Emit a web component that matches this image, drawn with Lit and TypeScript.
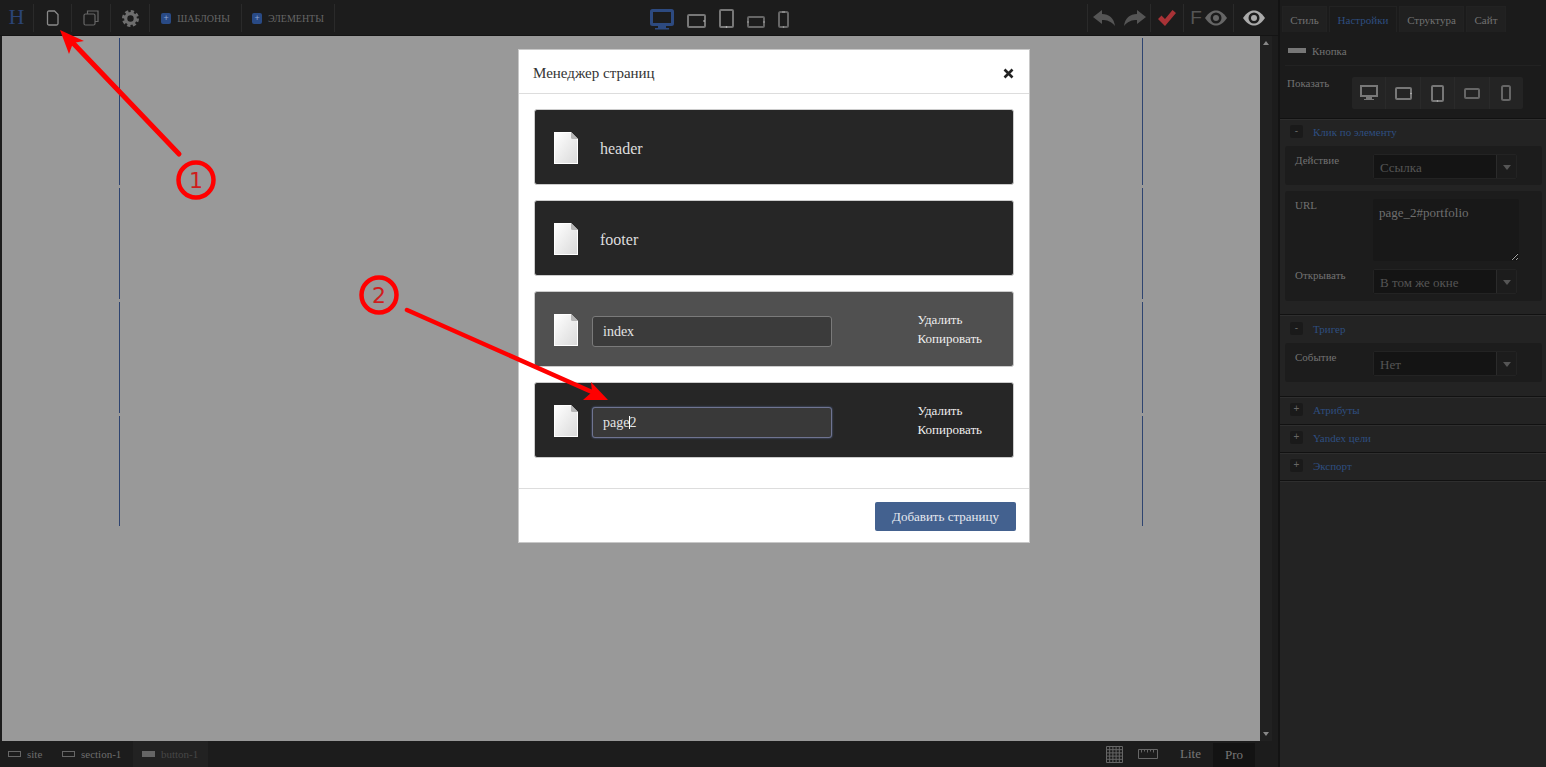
import { LitElement, html, css } from 'lit';
import { customElement } from 'lit/decorators.js';

const pageIcon = html`<svg class="page" width="24" height="32" viewBox="0 0 24 32">
  <defs><linearGradient id="pg" x1="0" y1="0" x2="1" y2="1"><stop offset="0" stop-color="#fff" /><stop offset="1" stop-color="#dadada" /></linearGradient></defs>
  <path d="M0 0H17L24 7V32H0Z" fill="#fff" />
  <path d="M1 1H16.500L23 7.500V31H1Z" fill="url(#pg)" />
  <path d="M17 0L24 7H18.500Q17 7 17 5.500Z" fill="#b5b5b5" />
</svg>`;

// toolbar device pictures, all in a 24px high box so they share a top edge
const bigDevices = html`
  <svg width="24" height="24" viewBox="0 0 24 24"><rect x="1.500" y="2.500" width="21" height="14" rx="1" fill="none" stroke="#2d4a80" stroke-width="3" /><path d="M8 18h8v2h3v1.500H5V20h3z" fill="#2d4a80" /></svg>
  <svg width="19" height="24" viewBox="0 0 19 24"><rect x="1" y="7" width="17" height="12" rx="1" fill="none" stroke="#777" stroke-width="2" /><circle cx="17" cy="13" r=".8" fill="#ccc" /></svg>
  <svg width="15" height="24" viewBox="0 0 15 24"><rect x="1" y="2" width="13" height="17" rx="1" fill="none" stroke="#777" stroke-width="2" /><circle cx="7.500" cy="19" r=".8" fill="#ccc" /></svg>
  <svg width="18" height="24" viewBox="0 0 18 24"><rect x="1" y="9" width="16" height="10" rx="1" fill="none" stroke="#666" stroke-width="2" /><circle cx="1" cy="14" r=".8" fill="#aaa" /><circle cx="17" cy="14" r=".8" fill="#aaa" /></svg>
  <svg width="11" height="24" viewBox="0 0 11 24"><rect x="1" y="4" width="9" height="15" rx="1.500" fill="none" stroke="#666" stroke-width="2" /><circle cx="5.500" cy="19" r=".8" fill="#aaa" /><path d="M4 4h3" stroke="#aaa" /></svg>
`;

const eye = (c: string) => html`<svg width="22" height="16" viewBox="0 0 22 16">
  <path d="M0 8C4 2 8 .5 11 .5S18 2 22 8C18 14 14 15.500 11 15.500S4 14 0 8Z" fill="${c}" />
  <circle cx="11" cy="8" r="5.500" fill="#1c1c1c" /><circle cx="11" cy="8" r="3" fill="${c}" />
</svg>`;

const smallDevices = html`
  <div class="show-cell"><svg width="18" height="16" viewBox="0 0 18 16"><rect x="1" y="1" width="16" height="10" fill="none" stroke="#777" stroke-width="2" /><path d="M6 12h6v2h2v1H4v-1h2z" fill="#777" /></svg></div>
  <div class="show-cell"><svg width="17" height="13" viewBox="0 0 17 13"><rect x="1" y="1" width="15" height="11" rx="1" fill="none" stroke="#777" stroke-width="2" /><circle cx="16" cy="6.500" r=".8" fill="#bbb" /></svg></div>
  <div class="show-cell"><svg width="13" height="17" viewBox="0 0 13 17"><rect x="1" y="1" width="11" height="15" rx="1" fill="none" stroke="#777" stroke-width="2" /><circle cx="6.500" cy="16" r=".8" fill="#bbb" /></svg></div>
  <div class="show-cell"><svg width="16" height="11" viewBox="0 0 16 11"><rect x="1" y="1" width="14" height="9" rx="1" fill="none" stroke="#666" stroke-width="2" /></svg></div>
  <div class="show-cell"><svg width="10" height="16" viewBox="0 0 10 16"><rect x="1" y="1" width="8" height="14" rx="1.500" fill="none" stroke="#666" stroke-width="2" /></svg></div>
`;

const guideNicks = html`<i class="nick n1"></i><i class="nick n2"></i><i class="nick n3"></i>`;

const select = (value: string) => html`<div class="select"><span class="select-value">${value}</span><span class="select-arrow"></span></div>`;

const section = (sign: string, title: string) => html`<div class="sec-head"><span class="sign">${sign}</span><span class="sec-title">${title}</span></div>`;

@customElement('app-root')
export class AppRoot extends LitElement {
  static styles = css`
    :host {
      display: block;
      position: relative;
      width: 1546px;
      height: 767px;
      overflow: hidden;
      font-family: 'Liberation Serif', serif;
      background: #1c1c1c;
    }
    * { box-sizing: border-box; }
    .app { display: grid; grid-template-columns: 1280px 266px; grid-template-rows: 767px; height: 767px; }
    .left { display: flex; flex-direction: column; min-width: 0; border-right: 2px solid #131313; }

    .toolbar { height: 36px; flex: none; display: flex; align-items: stretch; background: #1c1c1c; border-bottom: 1px solid #141414; }
    .tool { display: flex; align-items: center; justify-content: center; border-right: 1px solid #2a2a2a; margin: 4px 0 3px; color: #666; font-size: 10px; }
    .logo { width: 34px; color: #2b4476; font-size: 22px; padding-bottom: 2px; }
    .w38 { width: 38px; }
    .w39 { width: 39px; }
    .w92 { width: 92px; }
    .w93 { width: 93px; }
    .plus { width: 10px; height: 11px; margin-right: 6px; border-radius: 2px; background: #294a85; color: #8ea6d0; font: 9px/11px 'Liberation Sans', sans-serif; text-align: center; }
    .devices { display: flex; align-items: flex-start; gap: 13px; margin-left: 315px; padding-top: 8px; }
    .right-tools { display: flex; margin-left: auto; padding-right: 7px; }
    .undo { width: 64px; gap: 9px; border-left: 1px solid #2a2a2a; }
    .check { width: 33px; }
    .fview { width: 50px; gap: 3px; color: #555; font: 19px 'Liberation Sans', sans-serif; }
    .view { width: 37px; border-right: 0; padding-left: 2px; }

    .middle { flex: 1; display: flex; min-height: 0; padding: 0 6px 0 2px; }
    .canvas { flex: 1; position: relative; background: #999; }
    .guide { position: absolute; top: 2px; width: 1px; height: 488px; background: #2e4470; }
    .guide-a { left: 117px; }
    .guide-b { left: 1140px; }
    .nick { position: absolute; width: 3px; height: 3px; left: -1px; background: #999; }
    .n1 { top: 147px; }
    .n2 { top: 261px; }
    .n3 { top: 375px; }
    .scroll { width: 12px; background: #212121; display: flex; flex-direction: column; justify-content: space-between; align-items: center; padding: 5px 0; }
    .tri-up { border: 3px solid transparent; border-top: 0; border-bottom: 4px solid #888; }
    .tri-down { border: 3px solid transparent; border-bottom: 0; border-top: 4px solid #888; }

    .status { height: 26px; flex: none; display: flex; align-items: center; background: #1c1c1c; font-size: 11px; color: #6d6d6d; }
    .crumb { display: flex; align-items: center; gap: 6px; height: 100%; }
    .crumb-site { padding-left: 8px; width: 62px; }
    .crumb-section { width: 71px; }
    .crumb-active { width: 75px; padding-left: 9px; background: #222; color: #474747; }
    .box { width: 13px; height: 6px; border: 1px solid #666; }
    .box-fill { background: #666; }
    .status-right { margin-left: auto; display: flex; align-items: center; height: 100%; padding-right: 23px; font-size: 13px; color: #777; }
    .ruler { margin: 0 22px 0 15px; }
    .lite { margin-right: 12px; }
    .pro { width: 42px; height: 24px; margin-top: 2px; background: #131313; text-align: center; line-height: 24px; }

    .panel { display: flex; flex-direction: column; overflow: hidden; background: #1b1b1b; color: #727272; font-size: 11px; }
    .tabs { display: flex; gap: 2px; padding: 6px 0 0 2px; }
    .tab { height: 26px; line-height: 26px; text-align: center; background: #202020; border: 1px solid #222; border-bottom: 0; }
    .tab-on { color: #2e4e80; background: #1b1b1b; }
    .t45 { width: 45px; }
    .t68 { width: 68px; }
    .t65 { width: 65px; }
    .t40 { width: 40px; }
    .kind { display: flex; align-items: center; gap: 6px; height: 34px; margin: 0 5px; padding: 4px 0 0 3px; border-bottom: 1px solid #222; font-size: 11px; }
    .kind-icon { width: 18px; height: 5px; background: #777; }
    .show { display: flex; height: 52px; padding: 11px 0 0 7px; }
    .show-label { width: 65px; }
    .show-group { display: flex; width: 171px; height: 32px; background: #242424; border-radius: 2px; }
    .show-cell { flex: 1; display: flex; align-items: center; justify-content: center; border-right: 1px solid #2a2a2a; }
    .show-cell:last-child { border-right: 0; }

    .sec { background: #232323; border-top: 1px solid #111; box-shadow: inset 0 1px 0 #2e2e2e; padding-left: 5px; padding-right: 4px; }
    .sec-head { display: flex; align-items: center; height: 27px; padding: 0 0 2px 5px; }
    .sign { width: 13px; height: 13px; margin-right: 10px; border-radius: 2px; background: #1a1a1a; color: #666; text-align: center; font: 10px/12px 'Liberation Sans', sans-serif; }
    .sec-title { color: #2e4e80; }
    .group { background: #1c1c1c; border-radius: 3px; padding: 8px 0 6px 10px; margin-bottom: 6px; }
    .line { display: flex; }
    .line-label { width: 78px; }
    .select { display: flex; width: 144px; height: 25px; background: #141414; border: 1px solid #232323; border-radius: 2px; font-size: 13px; color: #555; }
    .select-value { flex: 1; padding-left: 6px; line-height: 25px; background: #141414; }
    .select-arrow { width: 20px; border-left: 1px solid #2b2b2b; background: #1c1c1c; position: relative; }
    .select-arrow::after { content: ''; position: absolute; left: 6px; top: 10px; border: 4px solid transparent; border-bottom: 0; border-top: 5px solid #555; }
    .area { width: 146px; height: 62px; margin: 0; padding: 6px; background: #181818; border: 0; border-radius: 2px; color: #6f6f6f; font: 13px 'Liberation Serif', serif; resize: vertical; outline: none; }
    .url { padding-bottom: 7px; }
    .gap-line { margin-top: 8px; }
    .sec-1 { padding-bottom: 7px; }
    .sec-2 { padding-top: 1px; padding-bottom: 8px; }
    .rest { flex: 1; background: #232323; border-top: 1px solid #111; box-shadow: inset 0 1px 0 #2e2e2e; }

    .modal { position: absolute; left: 518px; top: 49px; width: 512px; background: #fff; border: 1px solid #c8c8c8; color: #333; }
    .modal-head { display: flex; align-items: center; justify-content: space-between; height: 44px; padding: 3px 15px 0 14px; border-bottom: 1px solid #ddd; font-size: 15px; }
    .close { margin-top: 1px; }
    .modal-body { display: flex; flex-direction: column; gap: 15px; padding: 15px 15px 30px; }
    .row { display: flex; align-items: center; height: 76px; padding: 0 31px 0 19px; background: #262626; border: 1px solid #ccc; border-radius: 3px; color: #ddd; font-size: 16px; }
    .row-on { background: #505050; }
    .page { flex: none; margin-top: 2px; }
    .row-name { margin: 4px 0 0 22px; }
    .field { width: 240px; height: 31px; margin: 5px 0 0 14px; padding-left: 10px; line-height: 29px; font-size: 14px; background: #3b3b3b; border: 1px solid #7a7a7a; border-radius: 3px; color: #e4e4e4; }
    .field-focus { background: #393939; border-color: #6f7491; box-shadow: 0 0 2px #5b6fa0; }
    .caret { display: inline-block; width: 1px; height: 13px; margin-right: -1px; background: #fff; vertical-align: -2px; }
    .actions { margin-left: auto; font-size: 13px; line-height: 19px; color: #eee; }
    .modal-foot { height: 54px; padding: 13px 13px 0 0; border-top: 1px solid #ddd; display: flex; justify-content: flex-end; }
    .add { width: 141px; height: 29px; background: #43618f; border-radius: 2px; color: #e6e9ef; font-size: 13px; line-height: 29px; text-align: center; }

    .marks { position: absolute; left: 0; top: 0; pointer-events: none; }
    .mark-num { font: 22px 'DejaVu Sans', sans-serif; fill: #d01c1c; text-anchor: middle; }
  `;

  render() {
    return html`
      <div class="app">
        <div class="left">
          <div class="toolbar">
            <div class="tool logo">H</div>
            <div class="tool w38">
              <svg width="13" height="16" viewBox="0 0 13 16"><path d="M1.500 2.500Q1.500 1 3 1H8.500L12 4.500V13.500Q12 15 10.500 15H3Q1.500 15 1.500 13.500Z" fill="none" stroke="#8a8a8a" stroke-width="1.300" /></svg>
            </div>
            <div class="tool w39">
              <svg width="16" height="16" viewBox="0 0 16 16"><path d="M4.500 4V1H15V11.500H12" fill="none" stroke="#666" stroke-width="1.200" /><rect x="1" y="4" width="11" height="11" rx="1.500" fill="none" stroke="#666" stroke-width="1.200" /></svg>
            </div>
            <div class="tool w39">
              <svg width="17" height="17" viewBox="0 0 17 17"><circle cx="8.500" cy="8.500" r="4.800" fill="none" stroke="#6e6e6e" stroke-width="3.200" /><circle cx="8.500" cy="8.500" r="7" fill="none" stroke="#6e6e6e" stroke-width="3" stroke-dasharray="3.200 2.300" /></svg>
            </div>
            <div class="tool w92"><span class="plus">+</span>ШАБЛОНЫ</div>
            <div class="tool w93"><span class="plus">+</span>ЭЛЕМЕНТЫ</div>
            <div class="devices">${bigDevices}</div>
            <div class="right-tools">
              <div class="tool undo">
                <svg width="22" height="17" viewBox="0 0 22 17"><path d="M0 7L9 0V4C16 4 21 8 22 16C18 11 14 10 9 10V14Z" fill="#555" /></svg>
                <svg width="22" height="17" viewBox="0 0 22 17"><path d="M22 7L13 0V4C6 4 1 8 0 16C4 11 8 10 13 10V14Z" fill="#555" /></svg>
              </div>
              <div class="tool check">
                <svg width="18" height="16" viewBox="0 0 18 16"><path d="M0 9L3.500 5.500L7 9L14.500 0L18 3L7 16Z" fill="#a83236" /></svg>
              </div>
              <div class="tool fview">F${eye('#666')}</div>
              <div class="tool view">${eye('#aaa')}</div>
            </div>
          </div>
          <div class="middle">
            <div class="canvas">
              <div class="guide guide-a">${guideNicks}</div>
              <div class="guide guide-b">${guideNicks}</div>
            </div>
            <div class="scroll"><i class="tri-up"></i><i class="tri-down"></i></div>
          </div>
          <div class="status">
            <div class="crumb crumb-site"><i class="box"></i>site</div>
            <div class="crumb crumb-section"><i class="box"></i>section-1</div>
            <div class="crumb crumb-active"><i class="box box-fill"></i>button-1</div>
            <div class="status-right">
              <svg width="17" height="17" viewBox="0 0 17 17"><path d="M.5.500h16v16H.5zM.5 3.700h16M.5 6.900h16M.5 10.100h16M.5 13.300h16M3.700.500v16M6.900.500v16M10.100.500v16M13.300.500v16" fill="none" stroke="#666" /></svg>
              <svg class="ruler" width="20" height="10" viewBox="0 0 20 10"><path d="M.5.500h19v9H.5zM3.500.500v3M6.500.500v2M9.500.500v3M12.500.500v2M15.500.500v3" fill="none" stroke="#666" /></svg>
              <span class="lite">Lite</span>
              <span class="pro">Pro</span>
            </div>
          </div>
        </div>

        <div class="panel">
          <div class="tabs">
            <div class="tab t45">Стиль</div>
            <div class="tab t68 tab-on">Настройки</div>
            <div class="tab t65">Структура</div>
            <div class="tab t40">Сайт</div>
          </div>
          <div class="kind"><i class="kind-icon"></i>Кнопка</div>
          <div class="show">
            <div class="show-label">Показать</div>
            <div class="show-group">${smallDevices}</div>
          </div>
          <div class="sec sec-1">
            ${section('-', 'Клик по элементу')}
            <div class="group">
              <div class="line"><div class="line-label">Действие</div>${select('Ссылка')}</div>
            </div>
            <div class="group url">
              <div class="line"><div class="line-label">URL</div><textarea class="area">page_2#portfolio</textarea></div>
              <div class="line gap-line"><div class="line-label">Открывать</div>${select('В том же окне')}</div>
            </div>
          </div>
          <div class="sec sec-2">
            ${section('-', 'Тригер')}
            <div class="group">
              <div class="line"><div class="line-label">Событие</div>${select('Нет')}</div>
            </div>
          </div>
          <div class="sec">${section('+', 'Атрибуты')}</div>
          <div class="sec">${section('+', 'Yandex цели')}</div>
          <div class="sec">${section('+', 'Экспорт')}</div>
          <div class="rest"></div>
        </div>
      </div>

      <div class="modal">
        <div class="modal-head">
          <span>Менеджер страниц</span>
          <svg class="close" width="11" height="11" viewBox="0 0 11 11"><path d="M1.500 1.500L9.500 9.500M9.500 1.500L1.500 9.500" stroke="#222" stroke-width="2.600" /></svg>
        </div>
        <div class="modal-body">
          <div class="row">${pageIcon}<span class="row-name">header</span></div>
          <div class="row">${pageIcon}<span class="row-name">footer</span></div>
          <div class="row row-on">
            ${pageIcon}
            <div class="field">index</div>
            <div class="actions">Удалить<br />Копировать</div>
          </div>
          <div class="row">
            ${pageIcon}
            <div class="field field-focus">page<i class="caret"></i>2</div>
            <div class="actions">Удалить<br />Копировать</div>
          </div>
        </div>
        <div class="modal-foot"><div class="add">Добавить страницу</div></div>
      </div>

      <svg class="marks" width="1546" height="767" viewBox="0 0 1546 767">
        <path d="M179 154L72 42" stroke="#f00" stroke-width="5" stroke-linecap="round" fill="none" />
        <path d="M60 30L84 41L73 43L69 54Z" fill="#f00" />
        <circle cx="196" cy="180" r="17.500" fill="none" stroke="#f00" stroke-width="4.500" />
        <text class="mark-num" x="196" y="188">1</text>
        <path d="M407 310L592 392" stroke="#f00" stroke-width="4.500" stroke-linecap="round" fill="none" />
        <path d="M608 400L583 400L592 392L591 382Z" fill="#f00" />
        <circle cx="379" cy="295" r="17.500" fill="none" stroke="#f00" stroke-width="4.500" />
        <text class="mark-num" x="379" y="303">2</text>
      </svg>
    `;
  }
}
